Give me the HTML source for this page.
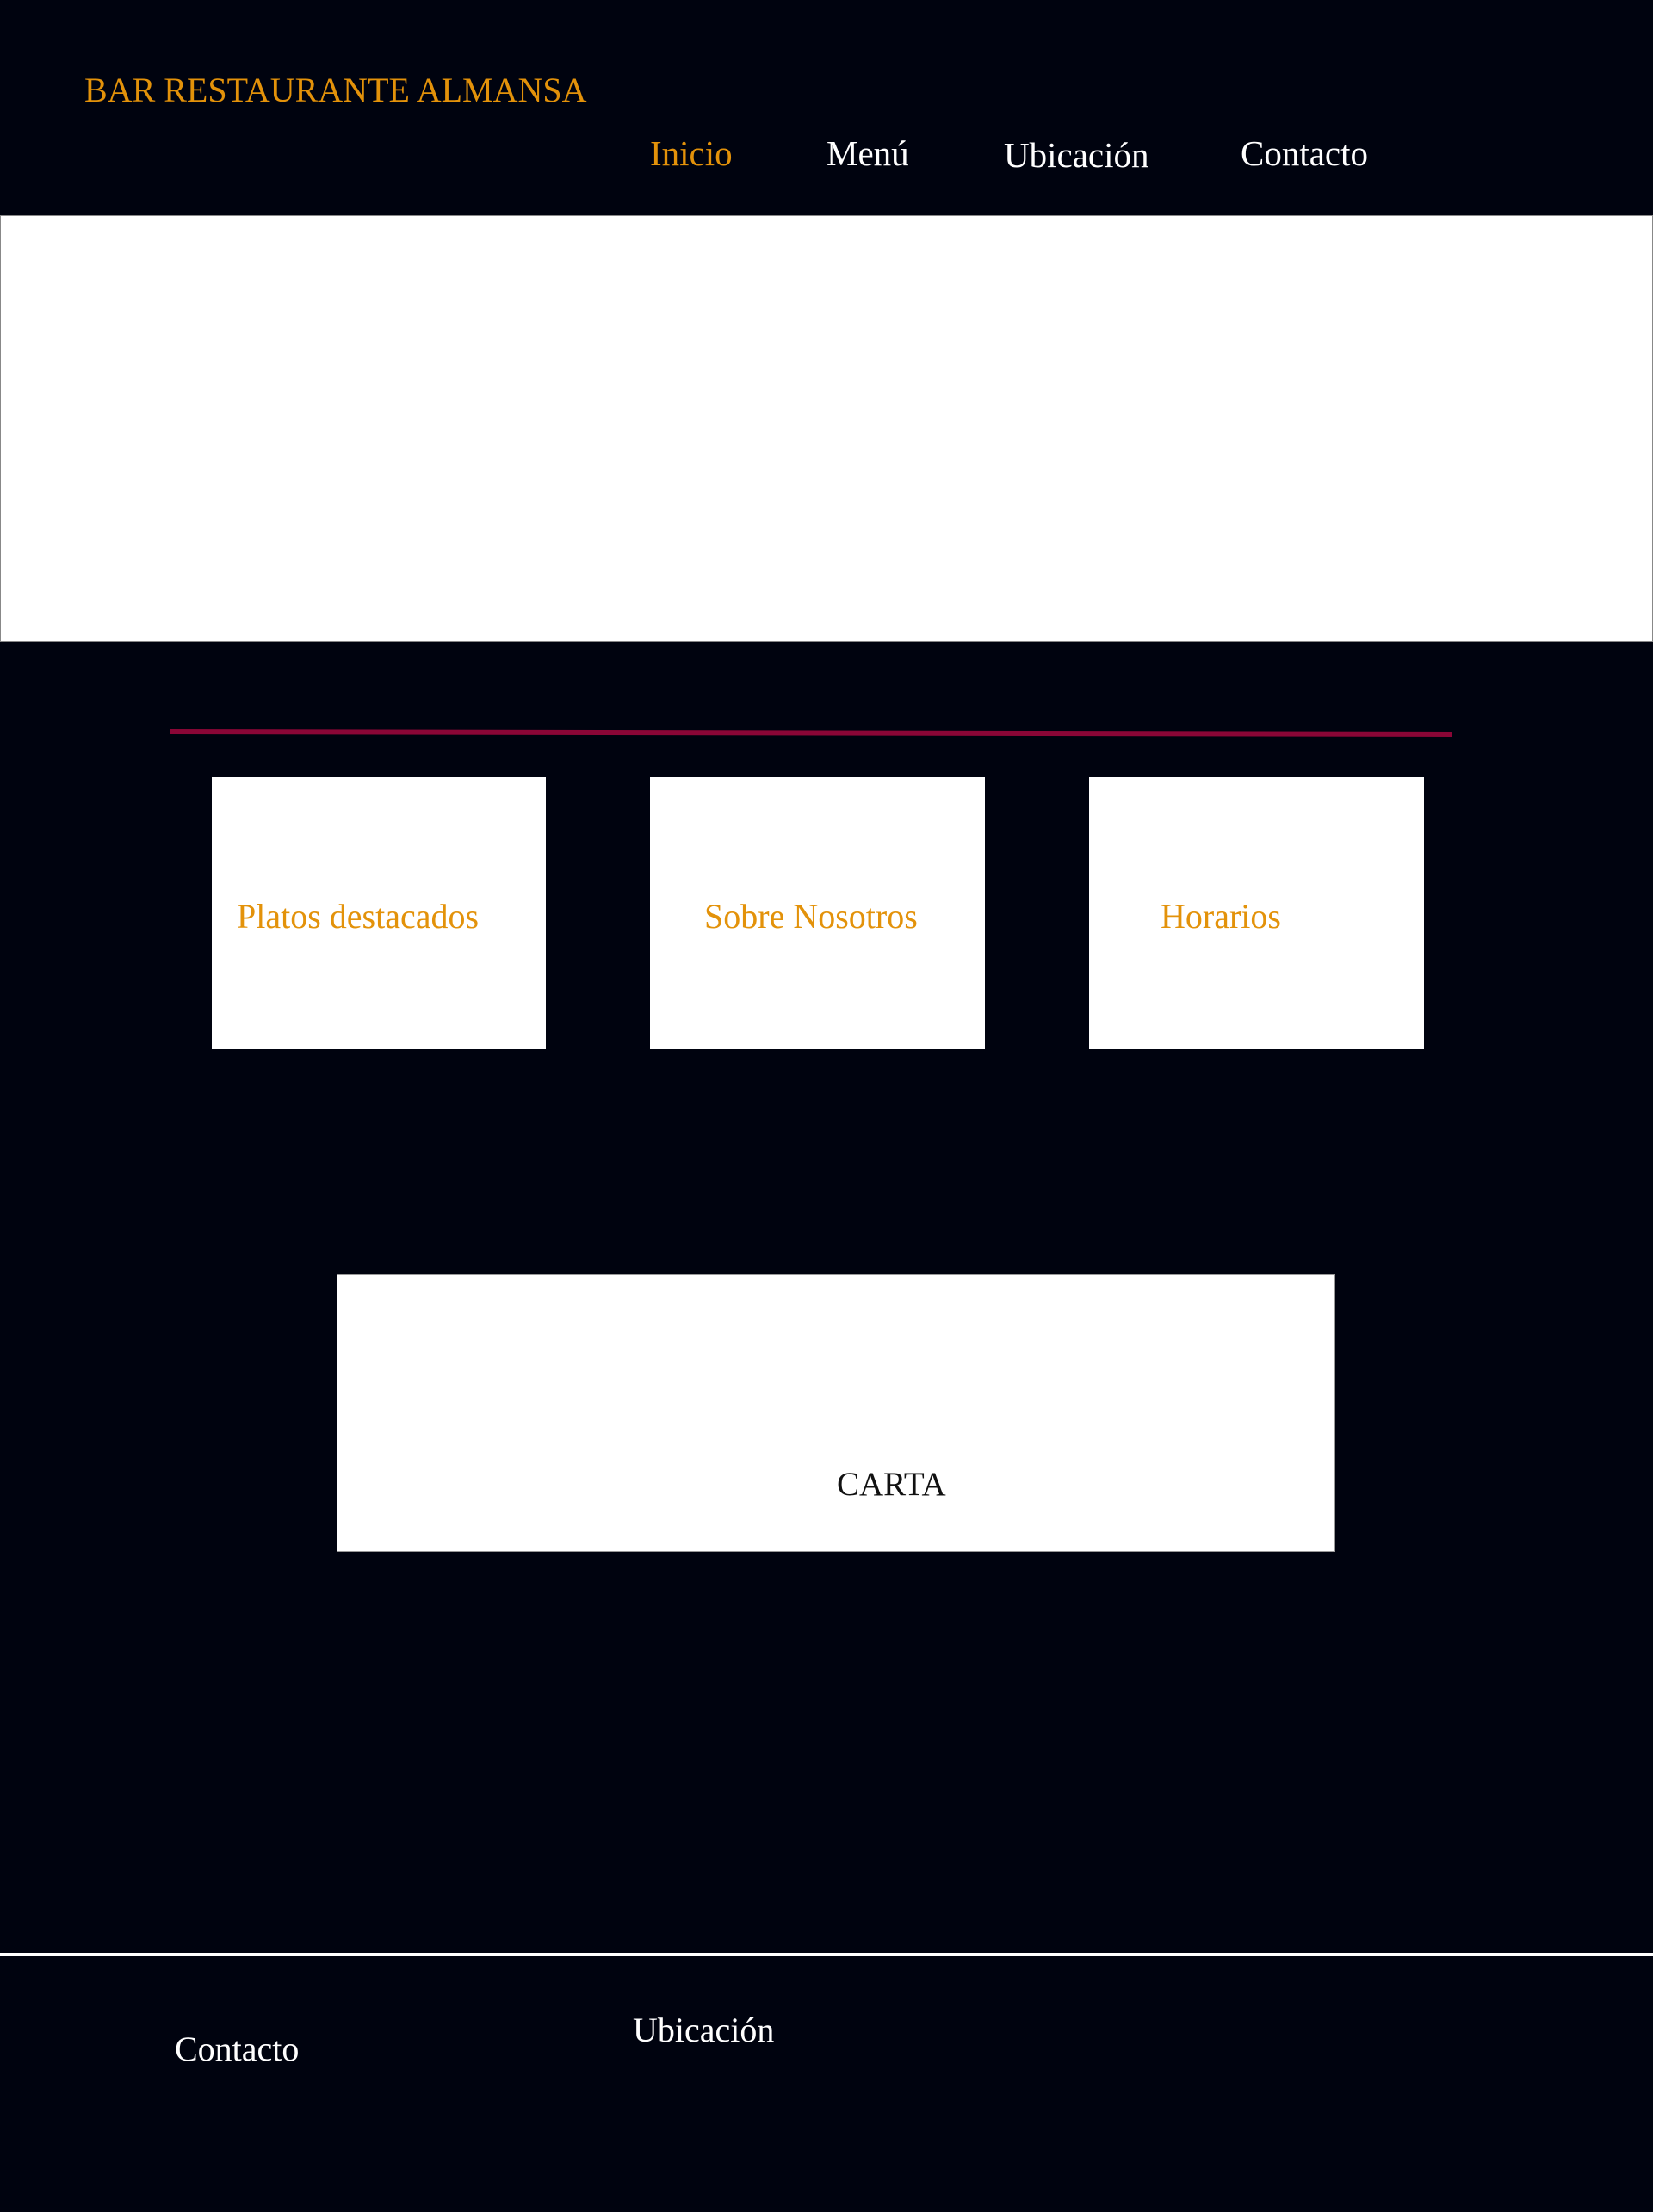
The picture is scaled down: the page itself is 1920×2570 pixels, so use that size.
<!DOCTYPE html>
<html><head><meta charset="utf-8">
<style>
html,body{margin:0;padding:0;}
body{width:1920px;height:2570px;background:#00030f;position:relative;overflow:hidden;font-family:"Liberation Serif",serif;}
.t{position:absolute;line-height:1;white-space:nowrap;}
.o{color:#e3920a;}
.w{color:#fff;}
.box{position:absolute;background:#fff;}
</style></head><body>
<div class="t o" style="left:98px;top:85px;font-size:40px;">BAR RESTAURANTE ALMANSA</div>
<div class="t o" style="left:755px;top:158px;font-size:41px;">Inicio</div>
<div class="t w" style="left:960px;top:158px;font-size:41px;">Menú</div>
<div class="t w" style="left:1166px;top:160px;font-size:41px;">Ubicación</div>
<div class="t w" style="left:1441px;top:158px;font-size:41px;">Contacto</div>

<div class="box" style="left:0;top:250px;width:1918px;height:494px;border:1px solid #888;"></div>

<svg style="position:absolute;left:0;top:0" width="1920" height="900"><line x1="198" y1="850" x2="1686" y2="853" stroke="#8a0636" stroke-width="6"/></svg>

<div class="box" style="left:246px;top:903px;width:388px;height:316px;"></div>
<div class="box" style="left:755px;top:903px;width:389px;height:316px;"></div>
<div class="box" style="left:1265px;top:903px;width:389px;height:316px;"></div>
<div class="t o" style="left:275px;top:1045px;font-size:40px;">Platos destacados</div>
<div class="t o" style="left:818px;top:1045px;font-size:40px;">Sobre Nosotros</div>
<div class="t o" style="left:1348px;top:1045px;font-size:40px;">Horarios</div>

<div class="box" style="left:391px;top:1480px;width:1160px;height:323px;border:1px solid #999;box-sizing:border-box;"></div>
<div class="t" style="left:972px;top:1705px;font-size:39px;color:#111;">CARTA</div>

<div style="position:absolute;left:0;top:2269px;width:1920px;height:3px;background:#fff;"></div>
<div class="t w" style="left:203px;top:2361px;font-size:40px;">Contacto</div>
<div class="t w" style="left:735px;top:2339px;font-size:40px;">Ubicación</div>
</body></html>
